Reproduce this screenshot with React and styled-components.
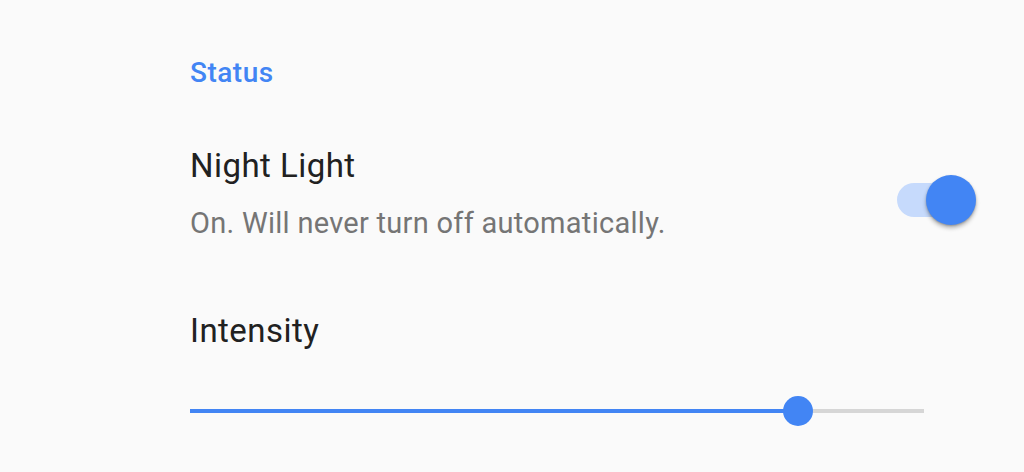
import styled, { createGlobalStyle } from "styled-components";

const GlobalStyle = createGlobalStyle`
  html, body {
    margin: 0;
    padding: 0;
    background: #fafafa;
    font-family: Roboto, "Liberation Sans", sans-serif;
  }
`;

const Page = styled.div`
  width: 1024px;
  height: 472px;
  box-sizing: border-box;
  padding: 57px 48px 0 190px;
  overflow: hidden;
`;

const SectionTitle = styled.div`
  color: #4285f4;
  font-size: 28px;
  font-weight: 500;
  line-height: 32px;
  letter-spacing: 0.5px;
`;

const Row = styled.div`
  display: flex;
  align-items: flex-start;
  justify-content: space-between;
  margin-top: ${(p) => p.gap || 0}px;
`;

const Texts = styled.div`
  display: flex;
  flex-direction: column;
  margin-top: ${(p) => p.gap || 0}px;
`;

const Title = styled.div`
  color: #212121;
  font-size: 33px;
  line-height: 40px;
  letter-spacing: 0.45px;
`;

const Summary = styled.div`
  color: #757575;
  font-size: 29px;
  line-height: 34px;
  letter-spacing: 0.28px;
  margin-top: 20px;
`;

const Switch = styled.div`
  position: relative;
  width: 80px;
  height: 50px;
  margin-top: 29px;
  display: flex;
  align-items: center;
`;

const Track = styled.div`
  margin-left: 1px;
  width: 62px;
  height: 34px;
  border-radius: 17px;
  background: #c6dafc;
`;

const Thumb = styled.div`
  position: absolute;
  right: 0;
  top: 0;
  width: 50px;
  height: 50px;
  border-radius: 50%;
  background: #4285f4;
  box-shadow: 0 3px 4px rgba(0, 0, 0, 0.28), 0 1px 2px rgba(0, 0, 0, 0.2);
`;

const Slider = styled.div`
  position: relative;
  width: 734px;
  height: 30px;
  margin-top: 45px;
  display: flex;
  align-items: center;
`;

const Rail = styled.div`
  width: 100%;
  height: 4px;
  background: #d6d6d6;
  display: flex;
`;

const Fill = styled.div`
  height: 100%;
  background: #4285f4;
`;

const Knob = styled.div`
  position: absolute;
  top: 0;
  width: 30px;
  height: 30px;
  margin-left: -15px;
  border-radius: 50%;
  background: #4285f4;
`;

const value = 608 / 734;

export default function App() {
  return (
    <Page>
      <GlobalStyle />
      <SectionTitle>Status</SectionTitle>
      <Row gap={57}>
        <Texts>
          <Title>Night Light</Title>
          <Summary>On. Will never turn off automatically.</Summary>
        </Texts>
        <Switch>
          <Track />
          <Thumb />
        </Switch>
      </Row>
      <Texts gap={71}>
        <Title>Intensity</Title>
      </Texts>
      <Slider>
        <Rail>
          <Fill style={{ width: `${value * 100}%` }} />
        </Rail>
        <Knob style={{ left: `${value * 100}%` }} />
      </Slider>
    </Page>
  );
}
